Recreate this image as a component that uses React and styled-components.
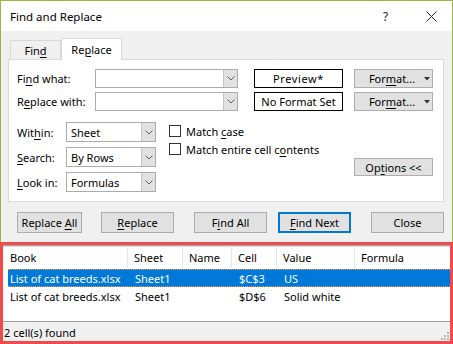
import React from "react";
import styled, { createGlobalStyle } from "styled-components";

const Global = createGlobalStyle`
  html, body { margin: 0; padding: 0; background: #ffffff; }
  body { font-family: "Noto Sans", "Open Sans", sans-serif; font-size: 11px; color: #000; }
  * { box-sizing: border-box; }
`;

const GREEN = "#9cb644";
const RED = "#f24a4a";

const Window = styled.div`
  width: 453px;
  height: 344px;
  display: flex;
  flex-direction: column;
  overflow: hidden;
`;

const TitleBar = styled.div`
  height: 31px;
  flex: none;
  background: #fff;
  border: 1px solid ${GREEN};
  border-bottom: none;
  display: flex;
  align-items: center;
  padding-left: 9px;
  font-size: 11.5px;
`;

const Title = styled.div`
  flex: 1;
`;

const Help = styled.div`
  width: 14px;
  font-size: 12px;
  margin-right: 29px;
  color: #222;
`;

const CloseX = styled.svg`
  margin-right: 15px;
`;

const Body = styled.div`
  flex: none;
  height: 211px;
  background: #f0f0f0;
  border-left: 1px solid ${GREEN};
  border-right: 1px solid ${GREEN};
  padding-top: 7px;
  display: flex;
  flex-direction: column;
`;

const TabBar = styled.div`
  display: flex;
  align-items: flex-end;
  padding-left: 9px;
  height: 21px;
  position: relative;
  z-index: 1;
`;

const Tab = styled.div`
  height: ${(p) => (p.$active ? 22 : 19)}px;
  width: ${(p) => p.$w}px;
  margin-bottom: ${(p) => (p.$active ? -1 : 0)}px;
  background: ${(p) => (p.$active ? "#fff" : "#f0f0f0")};
  border: 1px solid #d9d9d9;
  border-bottom: none;
  display: flex;
  justify-content: center;
  align-items: center;
  padding-top: ${(p) => (p.$active ? 0 : 1)}px;
`;

const U = styled.span`
  text-decoration: underline;
  text-underline-offset: 2px;
`;

const Panel = styled.div`
  margin: 0 8px 0 7px;
  height: 143px;
  background: #fff;
  border: 1px solid #d9d9d9;
  padding: 9px 10px 0 8px;
  display: flex;
  flex-direction: column;
`;

const FieldRow = styled.div`
  display: flex;
  align-items: center;
  height: ${(p) => p.$h || 19}px;
  margin-bottom: ${(p) => p.$mb || 0}px;
`;

const Label = styled.div`
  width: ${(p) => p.$w}px;
  flex: none;
`;

const Combo = styled.div`
  width: ${(p) => p.$w}px;
  height: ${(p) => p.$h || 19}px;
  flex: none;
  border: 1px solid #acacac;
  display: flex;
  background: #fff;
`;

const ComboText = styled.div`
  flex: 1;
  padding-left: 4px;
  display: flex;
  align-items: center;
`;

const ComboArrow = styled.div`
  width: 14px;
  background: #e1e1e1;
  border-left: 1px solid #c4c4c4;
  display: flex;
  align-items: center;
  justify-content: center;
`;

const PreviewBox = styled.div`
  width: 89px;
  height: 19px;
  margin-left: 16px;
  border: 1px solid #000;
  display: flex;
  align-items: center;
  justify-content: center;
  letter-spacing: ${(p) => p.$ls || 0}px;
`;

const Button = styled.div`
  width: ${(p) => p.$w}px;
  height: ${(p) => p.$h || 21}px;
  margin-left: ${(p) => p.$ml || 0}px;
  margin-top: ${(p) => p.$mt || 0}px;
  flex: none;
  background: #e1e1e1;
  border: ${(p) => (p.$focus ? "2px solid #0078d7" : "1px solid #adadad")};
  display: flex;
  align-items: center;
  justify-content: center;
  gap: 9px;
  padding-left: ${(p) => p.$pl || 0}px;
`;

const Section = styled.div`
  display: flex;
  margin-top: 11px;
`;

const Col = styled.div`
  display: flex;
  flex-direction: column;
  gap: ${(p) => p.$gap || 0}px;
  margin-left: ${(p) => p.$ml || 0}px;
  margin-top: ${(p) => p.$mt || 0}px;
`;

const CheckRow = styled.div`
  display: flex;
  align-items: center;
  height: 18px;
  gap: 5px;
`;

const Box = styled.div`
  width: 12px;
  height: 12px;
  border: 1px solid #333;
  background: #fff;
`;

const Spacer = styled.div`
  flex: 1;
`;

const ButtonRow = styled.div`
  display: flex;
  padding-left: 16px;
  margin-top: 10px;
`;

const Results = styled.div`
  flex: 1;
  border: 3px solid ${RED};
  background: #f0f0f0;
  display: flex;
  flex-direction: column;
  position: relative;
`;

const List = styled.div`
  height: 77px;
  background: #fff;
  border-top: 1px solid #a8a8a8;
  border-bottom: 1px solid #a0a0a0;
  box-shadow: inset 0 1px 1px #d8d8d8;
`;

const cols = "120px 55px 49px 45px 78px 1fr";

const Header = styled.div`
  display: grid;
  grid-template-columns: ${cols};
  height: 22px;
  margin-left: 5px;
`;

const HeadCell = styled.div`
  display: flex;
  align-items: center;
  padding-left: ${(p) => (p.$first ? 2 : 6)}px;
  border-right: 1px solid #e5e5e5;
  &:last-child { border-right: none; }
`;

const Row = styled.div`
  display: grid;
  grid-template-columns: ${cols};
  height: 18px;
  margin-left: 5px;
  margin-top: ${(p) => (p.$first ? 1 : 0)}px;
  background: ${(p) => (p.$sel ? "#0078d7" : "transparent")};
  color: ${(p) => (p.$sel ? "#fff" : "#000")};
  border-top: 1px dotted ${(p) => (p.$sel ? "#e9a14a" : "transparent")};
  border-bottom: 1px dotted ${(p) => (p.$sel ? "#e9a14a" : "transparent")};
`;

const Cell = styled.div`
  display: flex;
  align-items: center;
  padding-left: ${(p) => (p.$first ? 2 : 7)}px;
  white-space: nowrap;
`;

const Status = styled.div`
  flex: 1;
  display: flex;
  align-items: center;
  padding-left: 1px;
  padding-top: 1px;
`;

const Grip = styled.svg`
  position: absolute;
  right: 0;
  bottom: 0;
`;

const Chevron = () => (
  <svg width="8" height="5" viewBox="0 0 8 5">
    <path d="M0.5 0.5 L4 4 L7.5 0.5" fill="none" stroke="#606060" strokeWidth="1" />
  </svg>
);

const Tri = () => (
  <svg width="6" height="4" viewBox="0 0 6 4">
    <path d="M0 0 H6 L3 3.5 Z" fill="#333" />
  </svg>
);

const Select = ({ w, h, text }) => (
  <Combo $w={w} $h={h}>
    <ComboText>{text}</ComboText>
    <ComboArrow>
      <Chevron />
    </ComboArrow>
  </Combo>
);

const data = [
  ["List of cat breeds.xlsx", "Sheet1", "", "$C$3", "US", ""],
  ["List of cat breeds.xlsx", "Sheet1", "", "$D$6", "Solid white", ""],
];

export default function App() {
  return (
    <>
      <Global />
      <Window>
        <TitleBar>
          <Title>Find and Replace</Title>
          <Help>?</Help>
          <CloseX width="11" height="11" viewBox="0 0 11 11">
            <path d="M0.5 0.5 L10.5 10.5 M10.5 0.5 L0.5 10.5" stroke="#222" strokeWidth="1" />
          </CloseX>
        </TitleBar>
        <Body>
          <TabBar>
            <Tab $w={51}>
              Fin<U>d</U>
            </Tab>
            <Tab $w={61} $active>
              Re<U>p</U>lace
            </Tab>
          </TabBar>
          <Panel>
            <FieldRow $mb={4}>
              <Label $w={78}>
                Fi<U>n</U>d what:
              </Label>
              <Select w={143} />
              <PreviewBox $ls={0.6}>Preview*</PreviewBox>
              <Button $w={79} $h={19} $ml={11} $pl={12}>
                <span>
                  For<U>m</U>at...
                </span>
                <Tri />
              </Button>
            </FieldRow>
            <FieldRow>
              <Label $w={78}>
                R<U>e</U>place with:
              </Label>
              <Select w={143} />
              <PreviewBox>No Format Set</PreviewBox>
              <Button $w={79} $h={19} $ml={11} $pl={12}>
                <span>
                  For<U>m</U>at...
                </span>
                <Tri />
              </Button>
            </FieldRow>
            <Section>
              <Col $gap={5}>
                <FieldRow $h={20}>
                  <Label $w={49}>
                    Wit<U>h</U>in:
                  </Label>
                  <Select w={90} h={20} text="Sheet" />
                </FieldRow>
                <FieldRow $h={20}>
                  <Label $w={49}>
                    <U>S</U>earch:
                  </Label>
                  <Select w={90} h={20} text="By Rows" />
                </FieldRow>
                <FieldRow $h={20}>
                  <Label $w={49}>
                    <U>L</U>ook in:
                  </Label>
                  <Select w={90} h={20} text="Formulas" />
                </FieldRow>
              </Col>
              <Col $ml={13}>
                <CheckRow>
                  <Box />
                  <span>
                    Match <U>c</U>ase
                  </span>
                </CheckRow>
                <CheckRow>
                  <Box />
                  <span>
                    Match entire cell c<U>o</U>ntents
                  </span>
                </CheckRow>
              </Col>
              <Spacer />
              <Button $w={79} $h={18} $mt={36}>
                <span>
                  Op<U>t</U>ions &lt;&lt;
                </span>
              </Button>
            </Section>
          </Panel>
          <ButtonRow>
            <Button $w={65}>
              <span>
                Replace <U>A</U>ll
              </span>
            </Button>
            <Button $w={73} $ml={19}>
              <span>
                <U>R</U>eplace
              </span>
            </Button>
            <Button $w={73} $ml={20}>
              <span>
                F<U>i</U>nd All
              </span>
            </Button>
            <Button $w={73} $ml={11} $focus>
              <span>
                <U>F</U>ind Next
              </span>
            </Button>
            <Button $w={73} $ml={20}>
              <span>Close</span>
            </Button>
          </ButtonRow>
        </Body>
        <Results>
          <List>
            <Header>
              <HeadCell $first>Book</HeadCell>
              <HeadCell>Sheet</HeadCell>
              <HeadCell>Name</HeadCell>
              <HeadCell>Cell</HeadCell>
              <HeadCell>Value</HeadCell>
              <HeadCell>Formula</HeadCell>
            </Header>
            {data.map((r, i) => (
              <Row key={i} $sel={i === 0} $first={i === 0}>
                {r.map((c, j) => (
                  <Cell key={j} $first={j === 0}>
                    {c}
                  </Cell>
                ))}
              </Row>
            ))}
          </List>
          <Status>2 cell(s) found</Status>
          <Grip width="10" height="10" viewBox="0 0 10 10">
            <g fill="#b8b8b8">
              <rect x="7" y="1" width="2" height="2" />
              <rect x="4" y="4" width="2" height="2" />
              <rect x="7" y="4" width="2" height="2" />
              <rect x="1" y="7" width="2" height="2" />
              <rect x="4" y="7" width="2" height="2" />
              <rect x="7" y="7" width="2" height="2" />
            </g>
          </Grip>
        </Results>
      </Window>
    </>
  );
}
